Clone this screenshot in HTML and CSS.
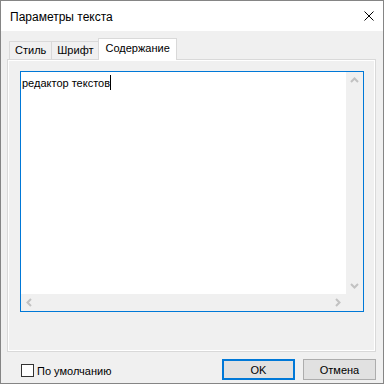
FILE: index.html
```html
<!DOCTYPE html>
<html lang="ru">
<head>
    <meta charset="UTF-8">
    <title>Параметры текста</title>
    <link rel="stylesheet" href="styles.css">
</head>
<body>
    <div class="window">
        <div class="titlebar">
            <span class="title">Параметры текста</span>
            <svg class="close" width="10" height="10" viewBox="0 0 10 10">
                <path d="M0.5 0.5 L9.5 9.5 M9.5 0.5 L0.5 9.5" stroke="#000" stroke-width="1" fill="none"/>
            </svg>
        </div>
        <div class="content">
            <div class="tabs">
                <div class="tab">Стиль</div>
                <div class="tab">Шрифт</div>
                <div class="tab active">Содержание</div>
            </div>
            <div class="pane">
                <div class="editor">
                    <div class="text">редактор текстов<span class="caret"></span></div>
                    <div class="vscroll">
                        <svg width="17" height="17" viewBox="0 0 17 17">
                            <path d="M5 10 L8.5 6.5 L12 10" stroke="#c2c2c2" stroke-width="2" fill="none"/>
                        </svg>
                        <svg width="17" height="17" viewBox="0 0 17 17">
                            <path d="M5 7 L8.5 10.5 L12 7" stroke="#c2c2c2" stroke-width="2" fill="none"/>
                        </svg>
                    </div>
                    <div class="hscroll">
                        <svg width="17" height="17" viewBox="0 0 17 17">
                            <path d="M10 5 L6.5 8.5 L10 12" stroke="#c2c2c2" stroke-width="2" fill="none"/>
                        </svg>
                        <svg width="17" height="17" viewBox="0 0 17 17">
                            <path d="M7 5 L10.5 8.5 L7 12" stroke="#c2c2c2" stroke-width="2" fill="none"/>
                        </svg>
                    </div>
                    <div class="corner"></div>
                </div>
            </div>
            <div class="bottom">
                <label class="check"><span class="box"></span>По умолчанию</label>
                <div class="buttons">
                    <button class="btn default">OK</button>
                    <button class="btn">Отмена</button>
                </div>
            </div>
        </div>
    </div>
</body>
</html>
```

FILE: styles.css
```css
* {
    box-sizing: border-box;
}
body {
    margin: 0;
    background: #fff;
    font-family: "Liberation Sans", Arial, sans-serif;
    font-size: 11px;
    color: #000;
}
.window {
    width: 384px;
    height: 384px;
    border: 1px solid #858585;
    background: #f0f0f0;
    display: flex;
    flex-direction: column;
}
.titlebar {
    height: 30px;
    background: #fff;
    display: flex;
    align-items: center;
    justify-content: space-between;
    padding: 0 9px 0 9px;
}
.title {
    font-size: 12px;
    margin-top: 1px;
}
.close {
    display: block;
    margin-top: -1px;
}
.content {
    padding: 7px 7px 0 6px;
}
.tabs {
    display: flex;
    align-items: flex-end;
    height: 21px;
    padding-left: 2px;
    position: relative;
    z-index: 1;
}
.tab {
    height: 18px;
    padding: 0 5px;
    border: 1px solid #d9d9d9;
    border-bottom: none;
    border-right: none;
    background: #f0f0f0;
    line-height: 17px;
}
.tab.active {
    height: 22px;
    margin-bottom: -1px;
    background: #fff;
    border-right: 1px solid #d9d9d9;
    padding: 0 6px;
    line-height: 19px;
}
.pane {
    height: 293px;
    border: 1px solid #d9d9d9;
    box-shadow: inset 0 0 0 1px #fff;
    padding: 11px 11px 0 12px;
}
.editor {
    width: 344px;
    height: 241px;
    border: 1px solid #0078d7;
    display: grid;
    grid-template-columns: 1fr 17px;
    grid-template-rows: 1fr 17px;
    background: #fff;
}
.text {
    padding: 3px 0 0 1px;
    line-height: 14px;
}
.caret {
    display: inline-block;
    width: 1px;
    height: 15px;
    background: #000;
    vertical-align: -3px;
}
.vscroll {
    background: #f0f0f0;
    display: flex;
    flex-direction: column;
    justify-content: space-between;
}
.hscroll {
    background: #f0f0f0;
    display: flex;
    justify-content: space-between;
}
.vscroll svg,
.hscroll svg {
    display: block;
}
.corner {
    background: #f0f0f0;
}
.bottom {
    display: flex;
    justify-content: space-between;
    align-items: center;
    margin-top: 7px;
    padding-left: 14px;
}
.check {
    display: flex;
    align-items: center;
    gap: 3px;
    margin-top: 2px;
}
.box {
    width: 13px;
    height: 13px;
    border: 1px solid #333;
    background: #fff;
}
.buttons {
    display: flex;
    gap: 8px;
}
.btn {
    width: 73px;
    height: 21px;
    border: 1px solid #adadad;
    background: #e1e1e1;
    font-family: "Liberation Sans", Arial, sans-serif;
    font-size: 11px;
    color: #000;
    padding: 0;
}
.btn.default {
    border: 2px solid #0078d7;
}
```
